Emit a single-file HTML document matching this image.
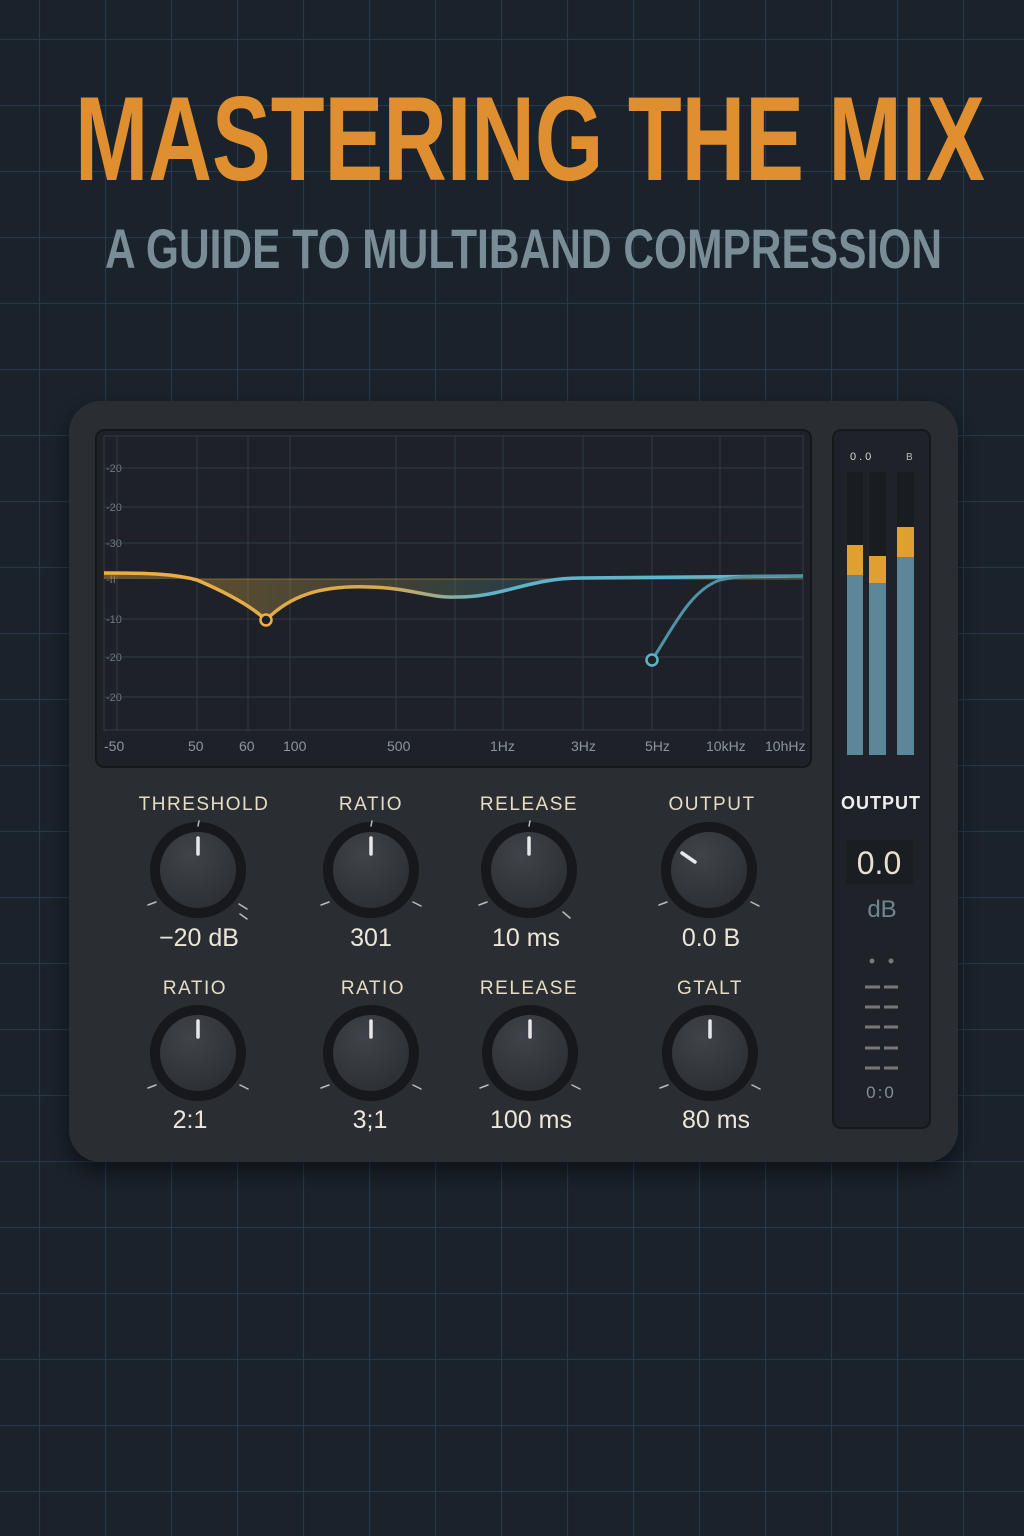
<!DOCTYPE html>
<html><head><meta charset="utf-8"><style>
html,body{margin:0;padding:0;width:1024px;height:1536px;overflow:hidden;background:#1a222b}
svg{display:block}
text{font-family:"Liberation Sans",sans-serif}
</style></head><body>
<svg width="1024" height="1536" viewBox="0 0 1024 1536" xmlns="http://www.w3.org/2000/svg">
<defs>
<pattern id="grid" x="39" y="39" width="66" height="66" patternUnits="userSpaceOnUse">
<path d="M0 0V66M0 0H66" stroke="#24394a" stroke-width="2.2" fill="none"/>
</pattern>
<radialGradient id="kn" cx="0.4" cy="0.3" r="0.8">
<stop offset="0" stop-color="#40444a"/><stop offset="1" stop-color="#2a2d31"/>
</radialGradient>
<linearGradient id="crv" x1="104" x2="803" y1="0" y2="0" gradientUnits="userSpaceOnUse">
<stop offset="0" stop-color="#f0b040"/><stop offset="0.4" stop-color="#d8a850"/><stop offset="0.55" stop-color="#5fb3c8"/><stop offset="1" stop-color="#62b8cc"/>
</linearGradient>
<linearGradient id="fill" x1="104" x2="803" y1="0" y2="0" gradientUnits="userSpaceOnUse">
<stop offset="0" stop-color="#c9952f" stop-opacity="0.45"/><stop offset="0.4" stop-color="#9a8a50" stop-opacity="0.3"/><stop offset="0.6" stop-color="#3f7f8f" stop-opacity="0.3"/><stop offset="1" stop-color="#2f6070" stop-opacity="0.25"/>
</linearGradient>
<filter id="sh" x="-10%" y="-10%" width="120%" height="130%"><feDropShadow dx="0" dy="10" stdDeviation="12" flood-color="#000" flood-opacity="0.5"/></filter>
</defs>
<rect width="1024" height="1536" fill="#1a222b"/>
<rect width="1024" height="1536" fill="url(#grid)"/>

<text x="75" y="180" font-size="120" font-weight="bold" fill="#e08f30" textLength="910" lengthAdjust="spacingAndGlyphs">MASTERING THE MIX</text>
<text x="105" y="268" font-size="56" font-weight="bold" fill="#7a8c95" textLength="837" lengthAdjust="spacingAndGlyphs">A GUIDE TO MULTIBAND COMPRESSION</text>

<rect x="69" y="401" width="889" height="761" rx="32" fill="#2b2e33" filter="url(#sh)"/>
<rect x="96" y="430" width="715" height="337" rx="8" fill="#1e2228" stroke="#15181b" stroke-width="2"/>
<g stroke="#333a44" stroke-width="1">
<path d="M104 468H803M104 507H803M104 543H803M104 619H803M104 657H803M104 697H803M104 730H803M104 436H803"/>
<path d="M117 436V730M197 436V730M248 436V730M290 436V730M396 436V730M455 436V730M503 436V730M583 436V730M652 436V730M720 436V730M765 436V730M803 436V730M104 436V730"/>
</g>
<g font-size="11" fill="#6f7780">
<text x="106" y="472">-20</text><text x="106" y="511">-20</text><text x="106" y="547">-30</text><text x="106" y="583">-II</text><text x="106" y="623">-10</text><text x="106" y="661">-20</text><text x="106" y="701">-20</text>
</g>
<g font-size="14" fill="#8d959e">
<text x="104" y="751">-50</text><text x="188" y="751">50</text><text x="239" y="751">60</text><text x="283" y="751">100</text><text x="387" y="751">500</text><text x="490" y="751">1Hz</text><text x="571" y="751">3Hz</text><text x="645" y="751">5Hz</text><text x="706" y="751">10kHz</text><text x="765" y="751">10hHz</text>
</g>
<path d="M104 573C150 573 175 574 197 580L197 580C225 592 250 605 266 620C290 596 320 585 370 587C410 588 430 598 455 597C500 598 530 578 580 578L803 577L803 579L104 579Z" fill="url(#fill)"/>
<path d="M197 579H803" stroke="#b08a40" stroke-opacity="0.4" stroke-width="1.5"/>
<path d="M104 573C150 573 175 574 197 580C225 592 250 605 266 620C290 596 320 585 370 587C410 588 430 598 455 597C500 598 530 578 580 578L803 576" fill="none" stroke="url(#crv)" stroke-width="3.5"/>
<path d="M652 660C672 630 690 590 720 580C740 575 770 576 803 576" fill="none" stroke="#4f93a6" stroke-width="3"/>
<circle cx="266" cy="620" r="5.5" fill="#1e2228" stroke="#f0b040" stroke-width="2.5"/>
<circle cx="652" cy="660" r="5.5" fill="#1e2228" stroke="#5fb3c8" stroke-width="2.5"/>

<rect x="833" y="430" width="97" height="698" rx="8" fill="#1f2329" stroke="#16191c" stroke-width="2"/>
<text x="850" y="460" font-size="11" fill="#d8d8d8" letter-spacing="3">0.0</text>
<text x="906" y="460" font-size="10" fill="#bbb">B</text>
<rect x="847" y="472" width="16" height="283" fill="#191c20"/><rect x="869" y="472" width="17" height="283" fill="#191c20"/><rect x="897" y="472" width="17" height="283" fill="#191c20"/>
<rect x="847" y="545" width="16" height="210" fill="#5b8799"/><rect x="847" y="545" width="16" height="30" fill="#e0a030"/>
<rect x="869" y="556" width="17" height="199" fill="#5b8799"/><rect x="869" y="556" width="17" height="27" fill="#e0a030"/>
<rect x="897" y="527" width="17" height="228" fill="#5b8799"/><rect x="897" y="527" width="17" height="30" fill="#e0a030"/>
<text x="881" y="809" font-size="18" font-weight="bold" fill="#eeeeee" text-anchor="middle" letter-spacing="1">OUTPUT</text>
<rect x="846" y="840" width="67" height="44" fill="#1a1d21"/>
<text x="879" y="874" font-size="32" fill="#e8e0cc" text-anchor="middle">0.0</text>
<text x="882" y="917" font-size="24" fill="#6f8791" text-anchor="middle">dB</text>
<g fill="#777"><circle cx="872" cy="961" r="2.5"/><circle cx="891" cy="961" r="2.5"/></g>
<g stroke="#777" stroke-width="3"><path d="M865 987H880M884 987H898M865 1007H880M884 1007H898M865 1027H880M884 1027H898M865 1048H880M884 1048H898M865 1068H880M884 1068H898"/></g>
<text x="881" y="1098" font-size="17" fill="#7f8f98" text-anchor="middle" letter-spacing="2">0:0</text>

<g font-size="19" fill="#e6dcc6" text-anchor="middle" letter-spacing="1.5">
<text x="204" y="810">THRESHOLD</text><text x="371" y="810">RATIO</text><text x="529" y="810">RELEASE</text><text x="712" y="810">OUTPUT</text>
<text x="195" y="994">RATIO</text><text x="373" y="994">RATIO</text><text x="529" y="994">RELEASE</text><text x="710" y="994">GTALT</text>
</g>
<g font-size="25" fill="#ece6da" text-anchor="middle">
<text x="199" y="946">−20 dB</text><text x="371" y="946">301</text><text x="526" y="946">10 ms</text><text x="711" y="946">0.0 B</text>
<text x="190" y="1128">2:1</text><text x="370" y="1128">3;1</text><text x="531" y="1128">100 ms</text><text x="716" y="1128">80 ms</text>
</g>

<g stroke-linecap="round">
<g transform="translate(198,870)"><circle r="48" fill="#16181b"/><circle r="38" fill="url(#kn)"/><path d="M0 -32V-16" stroke="#e8e8e8" stroke-width="3.5"/><path d="M0 -44L1 -49M-50 35L-42 32M41 34L49 39M42 44L49 49" stroke="#bbb" stroke-width="1.5"/></g>
<g transform="translate(371,870)"><circle r="48" fill="#16181b"/><circle r="38" fill="url(#kn)"/><path d="M0 -32V-16" stroke="#e8e8e8" stroke-width="3.5"/><path d="M0 -44L1 -49M-50 35L-42 32M42 32L50 36" stroke="#bbb" stroke-width="1.5"/></g>
<g transform="translate(529,870)"><circle r="48" fill="#16181b"/><circle r="38" fill="url(#kn)"/><path d="M0 -32V-16" stroke="#e8e8e8" stroke-width="3.5"/><path d="M0 -44L1 -49M-50 35L-42 32M34 42L41 48" stroke="#bbb" stroke-width="1.5"/></g>
<g transform="translate(709,870)"><circle r="48" fill="#16181b"/><circle r="38" fill="url(#kn)"/><path d="M-27 -17L-14 -8" stroke="#e8e8e8" stroke-width="3.5"/><path d="M-50 35L-42 32M42 32L50 36" stroke="#bbb" stroke-width="1.5"/></g>
<g transform="translate(198,1053)"><circle r="48" fill="#16181b"/><circle r="38" fill="url(#kn)"/><path d="M0 -32V-16" stroke="#e8e8e8" stroke-width="3.5"/><path d="M-50 35L-42 32M42 32L50 36" stroke="#bbb" stroke-width="1.5"/></g>
<g transform="translate(371,1053)"><circle r="48" fill="#16181b"/><circle r="38" fill="url(#kn)"/><path d="M0 -32V-16" stroke="#e8e8e8" stroke-width="3.5"/><path d="M-50 35L-42 32M42 32L50 36" stroke="#bbb" stroke-width="1.5"/></g>
<g transform="translate(530,1053)"><circle r="48" fill="#16181b"/><circle r="38" fill="url(#kn)"/><path d="M0 -32V-16" stroke="#e8e8e8" stroke-width="3.5"/><path d="M-50 35L-42 32M42 32L50 36" stroke="#bbb" stroke-width="1.5"/></g>
<g transform="translate(710,1053)"><circle r="48" fill="#16181b"/><circle r="38" fill="url(#kn)"/><path d="M0 -32V-16" stroke="#e8e8e8" stroke-width="3.5"/><path d="M-50 35L-42 32M42 32L50 36" stroke="#bbb" stroke-width="1.5"/></g>
</g>
</svg>
</body></html>
